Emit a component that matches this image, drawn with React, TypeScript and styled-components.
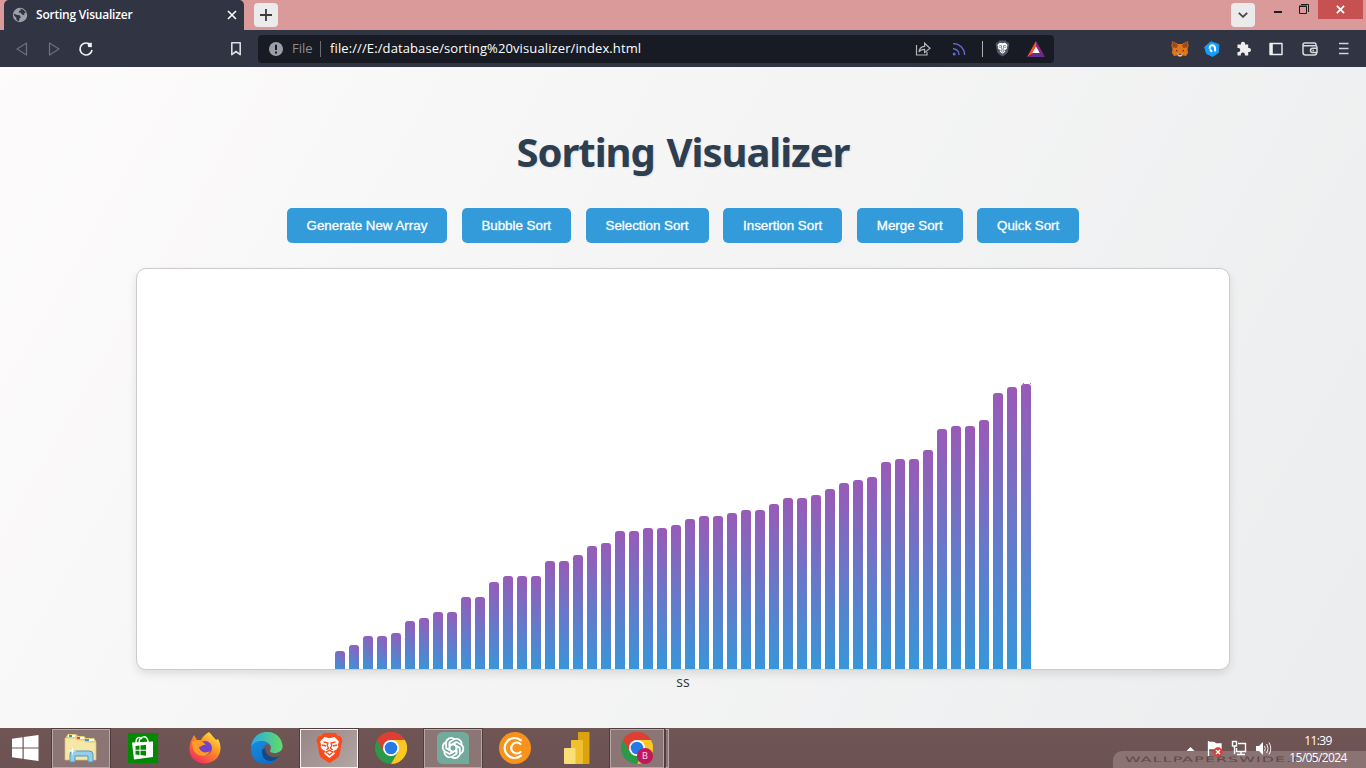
import React from "react";
import styled, { createGlobalStyle } from "styled-components";

const Global = createGlobalStyle`
  * { box-sizing: border-box; }
  body { margin: 0; overflow: hidden; }
  svg { display: block; flex: none; }
`;

const ui = `"Open Sans", "Noto Sans", sans-serif`;

const Screen = styled.div`
  width: 1366px;
  height: 768px;
  display: flex;
  flex-direction: column;
  font-family: ${ui};
`;

const TabStrip = styled.header`
  height: 30px;
  background: #da9a99;
  display: flex;
  padding-left: 4px;
`;

const Tab = styled.div`
  width: 240px;
  height: 30px;
  background: #303443;
  border-radius: 5px 5px 0 0;
  display: flex;
  align-items: center;
  padding: 0 7px 0 8px;
`;

const TabTitle = styled.span`
  flex: 1;
  margin-left: 8px;
  color: #fff;
  font-size: 12px;
  font-weight: 600;
  line-height: 16px;
  letter-spacing: -0.22px;
`;

const StripButton = styled.div<{ $left: number }>`
  width: 24px;
  height: 24px;
  margin: 3px 0 0 ${(p) => p.$left}px;
  border-radius: 4px;
  background: #ebebeb;
  display: grid;
  place-items: center;
`;

const WindowControls = styled.div`
  display: flex;
  margin-left: auto;
  margin-right: 3px;
`;

const CloseWindow = styled.div`
  width: 45px;
  height: 19px;
  margin-left: 9px;
  background: #c75050;
  display: grid;
  place-items: center;
`;

const Toolbar = styled.div`
  height: 37px;
  background: #303443;
  display: flex;
  align-items: center;
  padding: 0 15px;
`;

const NavIcons = styled.div`
  display: flex;
  align-items: center;
  width: 243px;
`;

const Gap = styled.span<{ $w: number }>`
  flex: none;
  width: ${(p) => p.$w}px;
`;

const AddressBar = styled.div`
  width: 796px;
  height: 28px;
  border-radius: 4px;
  background: #181b23;
  display: flex;
  align-items: center;
  padding: 0 9px 0 11px;
  font-size: 13px;
  line-height: 20px;
`;

const Scheme = styled.span`
  margin-left: 9px;
  width: 28px;
  padding-bottom: 1px;
  color: #8b8e96;
`;

const Rule = styled.i<{ $color: string }>`
  width: 1px;
  height: 16px;
  background: ${(p) => p.$color};
`;

const Address = styled.span`
  margin-left: 9px;
  padding-bottom: 1px;
  color: #fff;
  letter-spacing: 0.11px;
  white-space: nowrap;
`;

const AddressActions = styled.div`
  margin-left: auto;
  display: flex;
  align-items: center;
`;

const Extensions = styled.div`
  display: flex;
  align-items: center;
  margin-left: auto;
`;

const Page = styled.main`
  height: 661px;
  background: linear-gradient(120deg, #fdfbfb, #ebedee);
  display: flex;
  flex-direction: column;
  align-items: center;
  padding-top: 58px;
`;

const Heading = styled.h1`
  margin: 0;
  height: 56px;
  color: #2c3e50;
  font-family: "Noto Sans", sans-serif;
  font-size: 40px;
  font-weight: 700;
  line-height: 54px;
  letter-spacing: -1.05px;
  word-spacing: 2.5px;
  white-space: nowrap;
  text-shadow: 1px 1px 2px rgba(0, 0, 0, 0.1);
`;

const Controls = styled.div`
  display: flex;
  gap: 14.6px;
  margin-top: 27px;
`;

const SortButton = styled.button<{ $w: number }>`
  width: ${(p) => p.$w}px;
  height: 35px;
  padding: 0;
  border: 0;
  border-radius: 5px;
  background: #349bdb;
  color: #fff;
  font: 13.33px "Liberation Sans", sans-serif;
  -webkit-text-stroke: 0.3px #fff;
  white-space: nowrap;
`;

const Chart = styled.section`
  width: 1094px;
  height: 402px;
  margin-top: 25px;
  border: 1px solid #ccc;
  border-radius: 10px;
  background: #fff;
  box-shadow: 0 4px 8px rgba(0, 0, 0, 0.1);
  display: flex;
  justify-content: center;
  align-items: flex-end;
  gap: 4px;
`;

const Bar = styled.div`
  position: relative;
  width: 10px;
  border-radius: 3px 3px 0 0;
  background: linear-gradient(45deg, #3498db, #9b59b6);

  &:last-child::before {
    content: "";
    position: absolute;
    top: -1px;
    left: 2px;
    width: 6px;
    height: 1px;
    border: solid #a874bf;
    border-width: 0 1px;
  }
`;

const Caption = styled.p`
  margin: 2px 0 0;
  color: #333;
  font-size: 14px;
  line-height: 20px;
`;

const Taskbar = styled.footer`
  position: relative;
  height: 40px;
  background: linear-gradient(#705555, #6d5253);
  display: flex;
  align-items: center;
`;

const Task = styled.div<{ $w?: number; $state?: "open" | "active" }>`
  width: ${(p) => p.$w ?? 62}px;
  height: 39px;
  display: grid;
  place-items: center;
  ${(p) =>
    p.$state &&
    `margin: 0 2px;
     width: ${(p.$w ?? 62) - 4}px;
     border: 1px solid ${p.$state === "active" ? "#f5f1f1" : "#b6a6a6"};
     outline: 1px solid #503d3d;
     background: ${p.$state === "active" ? "linear-gradient(135deg, #988686, #b3a6a5)" : "#8b7575"};`}
`;

const Stack = styled.div`
  width: 4px;
  height: 39px;
  margin-left: -1px;
  border: 1px solid #b6a6a6;
  border-left-color: #503d3d;
  background: #8b7575;
`;

const Watermark = styled.div`
  position: absolute;
  right: 0;
  bottom: 0;
  width: 253px;
  height: 17px;
  padding-left: 12px;
  border-radius: 9px 0 0 0;
  background: #8b7273;
  overflow: hidden;
`;

const WatermarkText = styled.span`
  display: block;
  width: 120px;
  color: #604747;
  font: 7.5px/17px "DejaVu Sans", sans-serif;
  letter-spacing: 0.55px;
  white-space: nowrap;
  transform: scaleX(2.1);
  transform-origin: left;
`;

const Tray = styled.div`
  position: relative;
  margin-left: auto;
  display: flex;
  align-items: center;
  padding-right: 17px;
`;

const Clock = styled.div`
  width: 62px;
  margin-left: 15px;
  padding-top: 1px;
  color: #fff;
  font-size: 12px;
  line-height: 17px;
  text-align: center;
  letter-spacing: -0.6px;
  white-space: nowrap;
`;

const Globe = () => (
  <svg width="16" height="16" viewBox="0 0 16 16">
    <circle cx="8" cy="8" r="7.2" fill="#9da0a8" />
    <path d="M2 6.8 5.2 8 7.8 8.3 8.8 10.3 7.5 11.6 7 14.2 4.5 13 4.3 10.7 2 8.6ZM8.5 1.5 11.8 3 13.8 5.8 12.2 6.3 12.4 8.3 10 7.5 8.7 5.8 6.7 5.4 7 3.9 8.7 3.4Z" fill="#303443" />
  </svg>
);

const Cross = ({ s, c, w }: { s: number; c: string; w: number }) => (
  <svg width={s} height={s} viewBox="0 0 10 10">
    <path d="M1 1 9 9M9 1 1 9" stroke={c} strokeWidth={w} />
  </svg>
);

const Triangle = ({ flip }: { flip?: boolean }) => (
  <svg width="14" height="16" viewBox="0 0 14 16">
    <path d={flip ? "M2.5 2v12L12 8Z" : "M11.5 2v12L2 8Z"} fill="none" stroke="#6b6f7b" strokeWidth="1.3" strokeLinejoin="round" />
  </svg>
);

const Lion = ({ w, h, body, face }: { w: number; h: number; body: string; face: string }) => (
  <svg width={w} height={h} viewBox="0 0 28 32">
    <path d="M8 1H20L22.5 4 25.5 4.5 27 9 26 12 24 23Q23 26 14 31 5 26 4 23L2 12 1 9 2.5 4.5 5.5 4Z" fill={body} />
    <path d="M9 5 14 6.2 19 5 23.5 9.5 22.2 13 23 15 20.5 18 18 19 19.5 21.5 14 26 8.5 21.5 10 19 7.5 18 5 15 5.8 13 4.5 9.5Z" fill={face} />
    <path d="M8 10 12.5 11 11.7 13.5 13 16 11 17.8M20 10 15.5 11 16.3 13.5 15 16 17 17.8M6.5 13 10.5 14M21.5 13 17.5 14M10.5 20 14 18.3 17.5 20 14 22.8Z" fill="none" stroke={body} strokeWidth="1.3" />
  </svg>
);

const ChromeLogo = ({ badge }: { badge?: boolean }) => (
  <svg width="32" height="32" viewBox="0 0 32 32">
    <circle cx="16" cy="16" r="16" fill="#2a9a48" />
    <path d="M2.1 8A16 16 0 0 1 29.9 8H16L9 20Z" fill="#df3e32" />
    <path d="M16 8H29.9A16 16 0 0 1 16 32L23 20Z" fill="#fcc624" />
    <circle cx="16" cy="16" r="8" fill="#fff" />
    <circle cx="16" cy="16" r="6.3" fill="#2879e8" />
    {badge && (
      <>
        <circle cx="24" cy="24" r="8" fill="#c2185b" />
        <text x="24" y="27.3" textAnchor="middle" fill="#f6d2e0" fontFamily="Roboto, sans-serif" fontSize="9.5">B</text>
      </>
    )}
  </svg>
);

const heights = [
  18, 24, 33, 33, 36, 48, 51, 57, 57, 72, 72, 87, 93, 93, 93, 108, 108, 114, 123, 126, 138, 138, 141, 141, 144,
  150, 153, 153, 156, 159, 159, 165, 171, 171, 174, 180, 186, 189, 192, 207, 210, 210, 219, 240, 243, 243, 249, 276, 282, 285,
];

const buttons: [string, number][] = [
  ["Generate New Array", 160],
  ["Bubble Sort", 109.4],
  ["Selection Sort", 123],
  ["Insertion Sort", 119.2],
  ["Merge Sort", 105.8],
  ["Quick Sort", 101.8],
];

export default function App() {
  return (
    <Screen>
      <Global />
      <TabStrip>
        <Tab>
          <Globe />
          <TabTitle>Sorting Visualizer</TabTitle>
          <Cross s={10} c="#fff" w={1.6} />
        </Tab>
        <StripButton $left={10}>
          <svg width="12" height="12" viewBox="0 0 12 12"><path d="M6 0V12M0 6H12" stroke="#3c3c3c" strokeWidth="1.8" /></svg>
        </StripButton>
        <WindowControls>
          <StripButton $left={0}>
            <svg width="10" height="6" viewBox="0 0 10 6"><path d="M.8.8 5 4.8 9.2.8" fill="none" stroke="#444" strokeWidth="1.8" /></svg>
          </StripButton>
          <svg width="54" height="20" viewBox="0 0 54 20">
            <path d="M19 12H27" stroke="#1d1d1d" strokeWidth="2" />
            <path d="M44.5 6.5H51.5V13.5H44.5ZM44 6H52M46 4.5H53.5V12" fill="none" stroke="#1d1d1d" />
          </svg>
          <CloseWindow><Cross s={9} c="#fff" w={1.9} /></CloseWindow>
        </WindowControls>
      </TabStrip>

      <Toolbar>
        <NavIcons>
          <Triangle />
          <Gap $w={18} />
          <Triangle flip />
          <Gap $w={17} />
          <svg width="16" height="16" viewBox="0 0 16 16">
            <path d="M14 9A6 6 0 1 1 10.5 2.5" fill="none" stroke="#f1f1f3" strokeWidth="1.6" />
            <path d="M9.6 2 13.8 1.8V6.3L10 6Z" fill="#f1f1f3" />
          </svg>
          <Gap $w={136} />
          <svg width="12" height="16" viewBox="0 0 12 16">
            <path d="M1.8 1.8H10.2V13.7L6 10.5 1.8 13.7Z" fill="none" stroke="#dcdde0" strokeWidth="1.6" strokeLinejoin="round" />
          </svg>
        </NavIcons>
        <AddressBar>
          <svg width="14" height="14" viewBox="0 0 14 14">
            <circle cx="7" cy="7" r="7" fill="#9b9ea7" />
            <path d="M7 2.7V8M7 9.4V11.4" stroke="#181b23" strokeWidth="2" />
          </svg>
          <Scheme>File</Scheme>
          <Rule $color="#6b6e77" />
          <Address>file:///E:/database/sorting%20visualizer/index.html</Address>
          <AddressActions>
            <svg width="16" height="16" viewBox="0 0 16 16">
              <path d="M1.5 4V14H12V11M4 11C4.3 7.8 6 5.6 9.6 5.4V2.2L15 7.2 9.6 11.6V8.4C7 8.4 5.2 9.2 4 11Z" fill="none" stroke="#b3b5ba" strokeWidth="1.2" />
            </svg>
            <Gap $w={21} />
            <svg width="14" height="14" viewBox="0 0 14 14">
              <circle cx="2.2" cy="12" r="1.5" fill="#646bd2" />
              <path d="M1 6.8A5.8 5.8 0 0 1 7 13M1 1.6A11.3 11.3 0 0 1 12.6 13" fill="none" stroke="#646bd2" strokeWidth="1.4" />
            </svg>
            <Gap $w={16} />
            <Rule $color="#aeb0b4" />
            <Gap $w={11} />
            <Lion w={17} h={17} body="#505568" face="#fff" />
            <Gap $w={16} />
            <svg width="18" height="16" viewBox="0 0 18 16">
              <path d="M9 0 0 16 9 11Z" fill="#ff4e20" />
              <path d="M9 0 18 16 9 8Z" fill="#8d2c7e" />
              <path d="M0 16H18L11 10Z" fill="#662d91" />
              <path d="M9 5.4 12.7 12H5.3Z" fill="#fff" />
            </svg>
          </AddressActions>
        </AddressBar>
        <Extensions>
          <svg width="18" height="16" viewBox="0 0 18 16">
            <path d="M1 0 7 3H11L17 0 17.5 5 16.5 8 17 12 15 15 11.5 14.3 9.8 15.7H8.2L6.5 14.3 3 15 1 12 1.5 8 .5 5Z" fill="#e2761b" />
            <path d="M1 0 7 4 5.8 7 1.5 6.5ZM17 0 11 4 12.2 7 16.5 6.5Z" fill="#9c4b1b" />
            <path d="M6.5 12.5 9 11.8 11.5 12.5 11 15.2H7Z" fill="#d7c1b3" />
            <path d="M5 8.7 7.2 10.2H5ZM13 8.7 10.8 10.2H13ZM7.5 12.5H10.5V13.8H7.5Z" fill="#3a3232" />
          </svg>
          <Gap $w={15} />
          <svg width="16" height="16" viewBox="0 0 16 16">
            <path d="M7 .7 14.8 3.5 14.5 11.5 8.5 15.5 2.5 12.5 .7 6Z" fill="#159dfb" stroke="#159dfb" strokeLinejoin="round" />
            <path d="M5.8 7.8C5 3.5 10.5 3.2 11 7L11.2 10.5M6 8.5 8 10.8" fill="none" stroke="#fff" strokeWidth="2" />
          </svg>
          <Gap $w={16} />
          <svg width="16" height="16" viewBox="0 0 16 16">
            <path d="M1.5 3.5H5A2.1 2.1 0 1 1 9 3.5H12.2V7A2.1 2.1 0 1 1 12.2 11V14.5H8.8A2.1 2.1 0 1 0 4.9 14.5H1.5V11A2.1 2.1 0 1 0 1.5 7Z" fill="#eeeeef" />
          </svg>
          <Gap $w={16} />
          <svg width="16" height="16" viewBox="0 0 16 16">
            <path d="M2 2.5H14V13.5H2Z" fill="none" stroke="#eee" strokeWidth="1.4" strokeLinejoin="round" /><path d="M2 2.5H4.8V13.5H2Z" fill="#eee" />
          </svg>
          <Gap $w={17} />
          <svg width="18" height="16" viewBox="0 0 18 16">
            <path d="M15 4.5V3.5Q15 2 13.5 2H3.5Q2 2 2 4V11.5Q2 14 4.5 14H13.5Q15.5 14 15.5 12M2 4.7H14.5Q16 4.7 16 6.5V11.5H11.5Q9.5 11.5 9.5 9.5T11.5 7.3H16M11.5 9.5H13" fill="none" stroke="#d8d9dc" strokeWidth="1.5" />
          </svg>
          <Gap $w={18} />
          <svg width="14" height="16" viewBox="0 0 14 16"><path d="M2 2.5H11.5M2 7.5H11.5M2 12.5H11.5" stroke="#d4d5d8" strokeWidth="1.6" /></svg>
        </Extensions>
      </Toolbar>

      <Page>
        <Heading>Sorting Visualizer</Heading>
        <Controls>
          {buttons.map(([label, w]) => <SortButton key={label} $w={w}>{label}</SortButton>)}
        </Controls>
        <Chart>
          {heights.map((h, i) => <Bar key={i} style={{ height: h }} />)}
        </Chart>
        <Caption>ss</Caption>
      </Page>

      <Taskbar>
        <Watermark><WatermarkText>WALLPAPERSWIDE.COM</WatermarkText></Watermark>
        <Task $w={50}>
          <svg width="27" height="26" viewBox="0 0 27 26"><path d="M0 3.7 10.5 2.3V12.4H0ZM11.7 2.1 26.5 0V12.4H11.7ZM0 13.6H10.5V23.7L0 22.3ZM11.7 13.6H26.5V26L11.7 23.9Z" fill="#fff" /></svg>
        </Task>
        <Task $state="open">
          <svg width="34" height="30" viewBox="0 0 34 30">
            <path d="M2 4 4 1H12L14 3H20L22 5H30L32 8V26H2Z" fill="#e8cf7c" />
            <path d="M4 2H11V4H4Z" fill="#fff" /><path d="M5 2H8V4H5Z" fill="#35a853" />
            <path d="M13 4H20V6H13Z" fill="#fff" /><path d="M13 4H16V6H13Z" fill="#d94f36" />
            <path d="M21 6H30V8H21Z" fill="#fff" /><path d="M21 6H25V8H21Z" fill="#3b9ad8" />
            <path d="M1 5H11L13 7H20L22 9H32V27H1Z" fill="#f6e7a6" stroke="#d8be6d" strokeWidth=".7" />
            <path d="M6 29V21Q6 18 9 18H25Q29 18 29 21V29H24V23H11V29Z" fill="#93cfea" stroke="#5597bd" />
            <path d="M8.5 13 9.2 17.2 13 18 9.2 18.8 8.5 23 7.8 18.8 4 18 7.8 17.2Z" fill="#fff" />
          </svg>
        </Task>
        <Task>
          <svg width="30" height="30" viewBox="0 0 30 30">
            <path d="M0 0H30V30H0Z" fill="#008a00" />
            <path d="M4 9.5 25 8.5V24L6 26.5Z" fill="#fff" />
            <path d="M8 10C8 3.5 12 3.5 14 6M11 10C11 2.5 20 1.5 20 9" fill="none" stroke="#fff" strokeWidth="1.5" />
            <path d="M7.5 13 11.5 12.5V16.7H7.5ZM12.5 12.4 18 11.8V16.7H12.5ZM7.5 17.7H11.5V22L7.5 21.5ZM12.5 17.7H18V22.7L12.5 22Z" fill="#008a00" />
          </svg>
        </Task>
        <Task>
          <svg width="32" height="32" viewBox="0 0 32 32">
            <defs><linearGradient id="fx" x1="1" y1="0" x2=".25" y2="1"><stop offset=".1" stopColor="#ffe847" /><stop offset=".5" stopColor="#ff8b25" /><stop offset="1" stopColor="#f52a5d" /></linearGradient></defs>
            <path d="M20 0C23 3 25 6 27 8L29 7C33 14 32 21 28 26 21 34 7 33 2 24-1 17 1 10 3 7L5 3 8 8 12 8C14 4 17 2 20 0Z" fill="url(#fx)" />
            <circle cx="16" cy="16" r="7" fill="#7541cc" />
            <path d="M3 10C9 7 14 9 17 13 14 12 13 15 10 15 11 20 16 22 21 19 18 26 7 25 4 17Z" fill="#ff9c24" />
          </svg>
        </Task>
        <Task>
          <svg width="32" height="32" viewBox="0 0 32 32">
            <defs>
              <linearGradient id="eg"><stop stopColor="#2ba8ea" /><stop offset="1" stopColor="#62dc64" /></linearGradient>
              <linearGradient id="eb" x2=".6" y2="1"><stop stopColor="#168de0" /><stop offset="1" stopColor="#0f6fc8" /></linearGradient>
            </defs>
            <path d="M0 15C2-4 27-5 31 11 34 20 25 23 19 20L20 15C17 8 6 7 0 15Z" fill="url(#eg)" />
            <path d="M0 17C1 8 13 7 18 12 12 12 9 20 14 25 18 29 25 28 29 24 22 36 0 35 0 17Z" fill="url(#eb)" />
            <path d="M11 18C10 29 20 33 29 24 24 27 14 25 14 16Z" fill="#114a8b" />
          </svg>
        </Task>
        <Task $state="active"><Lion w={29} h={32} body="#fb4a1b" face="#fff" /></Task>
        <Task><ChromeLogo /></Task>
        <Task $state="open">
          <svg width="32" height="32" viewBox="0 0 32 32">
            <path d="M6 0H26Q32 0 32 6V32H6Q0 32 0 26V6Q0 0 6 0Z" fill="#74aa9c" />
            <g fill="none" stroke="#fff" strokeWidth="1.7">
              {[0, 60, 120, 180, 240, 300].map((a) => (
                <path key={a} transform={`rotate(${a} 16 16)`} d="M12.5 18V10.2L17 7.4C20.5 5.5 25.3 8.5 24.5 13M12.5 14 18.8 10.4" />
              ))}
            </g>
          </svg>
        </Task>
        <Task>
          <svg width="32" height="32" viewBox="0 0 32 32">
            <circle cx="16" cy="16" r="16" fill="#f7931a" />
            <path d="M22 8.3A10 10 0 1 0 22 23.7M21.5 12A5.5 5.5 0 1 0 21.5 20" fill="none" stroke="#fff" strokeWidth="2.2" strokeLinecap="round" />
          </svg>
        </Task>
        <Task>
          <svg width="26" height="32" viewBox="0 0 26 32">
            <rect x="14" width="11.5" height="32" rx="1" fill="#dda30e" /><rect x="7" y="8" width="12" height="24" rx="1" fill="#f0c12e" /><rect y="16" width="11.5" height="16" rx="1" fill="#f9df74" />
          </svg>
        </Task>
        <Task $w={58} $state="open"><ChromeLogo badge /></Task>
        <Stack />
        <Tray>
          <svg width="86" height="20" viewBox="0 0 86 20">
            <path d="M.5 13 4.5 9 8.5 13Z" fill="#fff" />
            <path d="M22.5 3V18M23 4.5H28L30 6H35V12H30L28 10.5H23Z" fill="#fff" stroke="#fff" strokeWidth="1.3" />
            <circle cx="32" cy="14" r="4.7" fill="#df3b30" />
            <path d="M30 12 34 16M34 12 30 16" stroke="#fff" strokeWidth="1.5" />
            <path d="M52 5.5H59.5V13.5H50.5V10M55 14V17M51 16.5H59M46.5 3.5H50.5V8H46.5ZM48.5 8V16" fill="none" stroke="#fff" strokeWidth="1.4" />
            <path d="M70 8H73L77 4V17L73 13H70Z" fill="#fff" />
            <path d="M78.5 8Q80 10.5 78.5 13M80.7 6Q83.5 10.5 80.7 15M83 4.5Q86.5 10.5 83 16.5" fill="none" stroke="#fff" strokeWidth=".9" />
          </svg>
          <Clock>11:39<br />15/05/2024</Clock>
        </Tray>
      </Taskbar>
    </Screen>
  );
}
